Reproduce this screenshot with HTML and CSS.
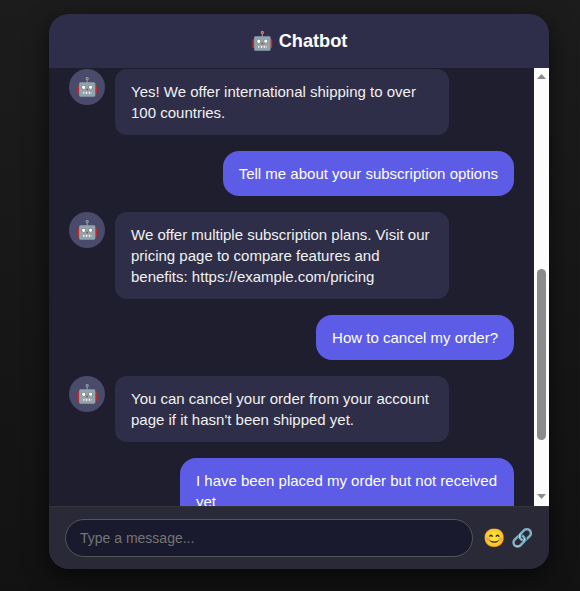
FILE: index.html
```html
<!DOCTYPE html>
<html lang="en"><head><meta charset="utf-8"><title>Chatbot</title><link rel="stylesheet" href="styles.css"></head>
<body>
<div class="chat">
<header class="chat-header">🤖 Chatbot</header>
<div class="chat-body">
<main class="messages">
<div class="row bot"><div class="avatar">🤖</div><div class="bubble">Yes! We offer international shipping to over 100 countries.</div></div>
<div class="row user"><div class="bubble">Tell me about your subscription options</div></div>
<div class="row bot"><div class="avatar">🤖</div><div class="bubble">We offer multiple subscription plans. Visit our pricing page to compare features and benefits: https://example.com/pricing</div></div>
<div class="row user"><div class="bubble">How to cancel my order?</div></div>
<div class="row bot"><div class="avatar">🤖</div><div class="bubble">You can cancel your order from your account page if it hasn't been shipped yet.</div></div>
<div class="row user"><div class="bubble">I have been placed my order but not received yet</div></div>
</main>
<div class="scrollbar"><i class="arrow up"></i><i class="thumb"></i><i class="arrow down"></i></div>
</div>
<footer class="composer"><input type="text" placeholder="Type a message..."><span class="tool">😊</span><span class="tool">🔗</span></footer>
</div>
</body></html>
```
FILE: styles.css
```css
* { box-sizing: border-box; }
body { margin: 0; height: 591px; overflow: hidden; padding: 14px 31px 22px 49px; background: linear-gradient(#1c1c1c, #121212); font: 15px/21px "Liberation Sans", Arial, sans-serif; color: #f1f1f1; }
.chat { height: 555px; display: flex; flex-direction: column; border-radius: 20px; overflow: hidden; background: #1f1e2e; box-shadow: 0 8px 24px rgba(0,0,0,.6); }
.chat-header { height: 54px; flex: none; background: #2f2e4a; text-align: center; font-size: 18.2px; font-weight: bold; line-height: 54px; color: #fff; }
.chat-body { flex: 1; min-height: 0; display: flex; }
.messages { flex: 1; overflow: hidden; padding: 1px 20px 0; display: flex; flex-direction: column; gap: 16px; }
.row { display: flex; gap: 10px; flex: none; align-items: flex-start; }
.row.user { justify-content: flex-end; }
.avatar { width: 36px; height: 36px; flex: none; border-radius: 50%; background: #4a4a6a; font-size: 18px; line-height: 36px; text-align: center; }
.bubble { max-width: 334px; padding: 12px 16px; border-radius: 12px; background: #2f2e48; }
.user .bubble { border-radius: 16px; background: #5c5ce6; color: #fff; }
.scrollbar { width: 15px; flex: none; background: #fcfcfc; display: flex; flex-direction: column; align-items: center; padding: 6px 0; }
.arrow { width: 9px; height: 5px; background: #8b8b8b; }
.up { clip-path: polygon(50% 0, 100% 100%, 0 100%); }
.down { clip-path: polygon(0 0, 100% 0, 50% 100%); margin-top: 54px; }
.thumb { width: 9px; height: 171px; border-radius: 5px; background: #8b8b8b; margin-top: 190px; }
.composer { height: 63px; flex: none; display: flex; align-items: center; padding: 0 16px; background: #2a2938; border-top: 1px solid #333; }
.composer input { width: 408px; flex: none; height: 38px; padding: 0 14px; margin-right: 10px; border: 1px solid #555; border-radius: 19px; background: #1a1a2e; color: #fff; font: 14px "Liberation Sans", Arial, sans-serif; }
.tool { font-size: 18px; margin-right: 6px; flex: none; }
```
